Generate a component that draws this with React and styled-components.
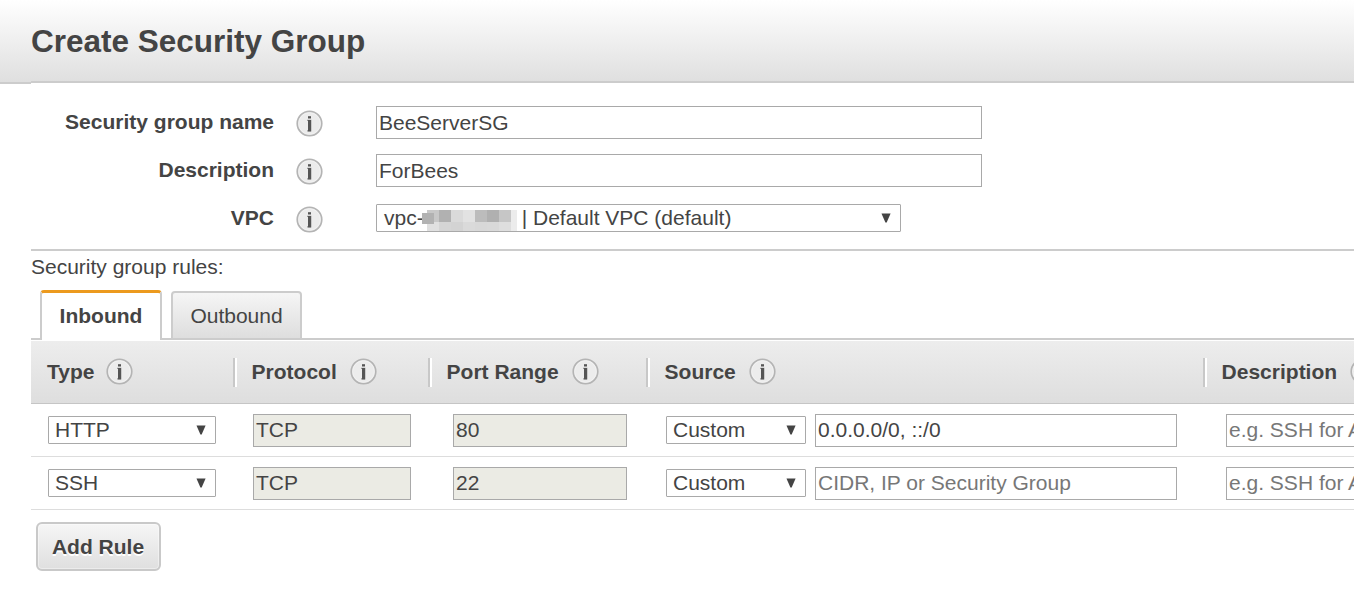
import React from "react";
import styled, { createGlobalStyle } from "styled-components";

const GlobalStyle = createGlobalStyle`
  * { box-sizing: border-box; }
  html, body { margin: 0; padding: 0; background: #fff; overflow: hidden; }
  body {
    font-family: "Liberation Sans", Arial, sans-serif;
    font-size: 21px;
    line-height: 24px;
    color: #444;
  }
`;

const Page = styled.div`
  width: 100vw;
  height: 100vh;
  overflow: hidden;
`;

const Header = styled.header`
  height: 84px;
  padding: 22px 0 0 31px;
  border-bottom: 2px solid #ccc;
  background: linear-gradient(#fff, #dfdfdf);
`;

const Title = styled.h1`
  margin: 0;
  font-size: 31.5px;
  line-height: 38px;
  font-weight: bold;
`;

const Content = styled.main`
  position: relative;
  margin: -3px 0 0 31px;
  border-top: 2px solid #ccc;
  background: #fff;
`;

const Form = styled.div`
  height: 166px;
  padding-top: 23px;
  display: flex;
  flex-direction: column;
  gap: 15px;
`;

const FormRow = styled.div`
  display: flex;
  height: 33px;
`;

const Label = styled.label`
  width: 243px;
  padding-top: 4px;
  text-align: right;
  font-weight: bold;
`;

const FormIcon = styled.div`
  width: 102px;
  padding: 4px 0 0 22px;
`;

const InfoSvg = styled.svg`
  display: block;
  flex: none;
`;

const Field = styled.div`
  flex: none;
  width: ${(p) => p.$width}px;
  height: 33px;
  padding: ${(p) => (p.$low ? 4 : 3)}px 2px 0;
  border: 1px solid #a9a9a9;
  background: ${(p) => (p.$disabled ? "#ebebe4" : "#fff")};
  color: ${(p) => (p.$placeholder ? "#777" : "#444")};
  white-space: nowrap;
  overflow: hidden;
`;

const SelectBox = styled.div`
  flex: none;
  display: flex;
  align-items: center;
  justify-content: space-between;
  width: ${(p) => p.$width}px;
  height: 28px;
  margin-top: 2px;
  padding: 0 9px 0 ${(p) => p.$inset}px;
  border: 1px solid #a9a9a9;
  border-radius: 1px;
  background: #fff;
  white-space: nowrap;
`;

const SelectText = styled.span`
  display: flex;
  align-items: center;
`;

const Mosaic = styled.svg`
  display: block;
  margin: 0 5px 0 -2px;
`;

const RulesSection = styled.section`
  border-top: 2px solid #ccc;
`;

const RulesTitle = styled.div`
  height: 39px;
  padding-top: 4px;
`;

const Tabs = styled.div`
  display: flex;
  align-items: flex-end;
  gap: 9px;
  height: 50px;
  padding-left: 9px;
  background: linear-gradient(#ccc, #ccc) 0 48px / 100% 2px no-repeat;
`;

const Tab = styled.div`
  display: flex;
  justify-content: center;
  width: ${(p) => (p.$active ? 122 : 131)}px;
  height: ${(p) => (p.$active ? 50 : 49)}px;
  padding-top: 11px;
  border: 2px solid #ccc;
  border-top: ${(p) => (p.$active ? "3px solid #ec9a1e" : "2px solid #ccc")};
  border-bottom: ${(p) => (p.$active ? "0" : "2px solid #ccc")};
  border-radius: 4px 4px 0 0;
  background: ${(p) => (p.$active ? "#fff" : "linear-gradient(#f5f5f5, #dedede)")};
  font-weight: ${(p) => (p.$active ? "bold" : "normal")};
`;

const columns = "202px 195px 218px 557px 400px";

const TableHead = styled.div`
  display: grid;
  grid-template-columns: ${columns};
  height: 63px;
  margin-top: 1px;
  border-bottom: 1px solid #c5c5c5;
  background: linear-gradient(#ededed, #dedede);
  font-weight: bold;
`;

const HeadCell = styled.div`
  display: flex;
  align-items: center;
  gap: ${(p) => (p.$first ? 12 : 13)}px;
  height: 29px;
  margin-top: 17px;
  padding: 0 0 2px ${(p) => (p.$first ? 16 : 16.6)}px;
  border-left: ${(p) => (p.$first ? "0" : "2px solid #c8c8c8")};
  box-shadow: ${(p) => (p.$first ? "none" : "inset 2px 0 #fff")};
`;

const RuleRow = styled.div`
  display: grid;
  grid-template-columns: ${columns};
  height: 53px;
  padding-top: 10px;
  border-bottom: 1px solid #ddd;
`;

const RuleCell = styled.div`
  display: flex;
  gap: 9px;
  padding-left: ${(p) => p.$inset}px;
`;

const AddButton = styled.button`
  display: block;
  width: 125px;
  height: 49px;
  margin: 12px 0 0 5px;
  padding: 0 1px 0 0;
  border: 2px solid #c9c9c9;
  border-radius: 6px;
  background: linear-gradient(#f6f6f6, #dfdfdf);
  box-shadow: inset 0 0 0 1px rgba(255, 255, 255, 0.4);
  color: #444;
  font: bold 21px/24px "Liberation Sans", Arial, sans-serif;
  text-shadow: 0 2px 0 #fff;
`;

function InfoIcon() {
  return (
    <InfoSvg width="27" height="27" viewBox="0 0 27 27">
      <circle cx="13.5" cy="13.5" r="12.2" fill="#ececec" stroke="#b4b4b4" strokeWidth="1.8" />
      <circle cx="13.5" cy="13.5" r="10.9" fill="none" stroke="#f4f4f4" strokeWidth="0.8" />
      <path d="M11 9.8h4.4v11.8H11v-1.4h1V11h-1z" fill="#999" />
      <rect x="12" y="6.2" width="3" height="2.3" fill="#555" />
      <rect x="12" y="10" width="3" height="11.4" fill="#555" />
    </InfoSvg>
  );
}

function Arrow() {
  return (
    <svg width="10" height="10" viewBox="0 0 10 10">
      <path d="M0.5 0.5h9.1L5.7 9.5H4.4z" fill="#444" />
    </svg>
  );
}

function Select({ width, inset = 6, children }) {
  return (
    <SelectBox $width={width} $inset={inset}>
      <SelectText>{children}</SelectText>
      <Arrow />
    </SelectBox>
  );
}

const mosaicTop = ["#c8c8c8", "#b1b1b1", "#dadada", "#e2e2e2", "#bcbcbc", "#b0b0b0", "#c6c6c6", "#ececec"];
const mosaicBottom = ["#e0e0e0", "#d5d5d5", "#d3d3d3", "#dadada", "#d8d8d8", "#d9d9d9", "#dedede", "#ececec"];

function HiddenId() {
  return (
    <Mosaic width="95" height="26" viewBox="0 0 95 26" shapeRendering="crispEdges">
      {mosaicTop.map((fill, i) => (
        <rect key={i} x={i * 12 + 5} y="5" width={i === 7 ? 6 : 12} height="12" fill={fill} />
      ))}
      {mosaicBottom.map((fill, i) => (
        <rect key={i} x={i * 12 + 5} y="17" width={i === 7 ? 6 : 12} height="9" fill={fill} />
      ))}
      <rect x="0" y="8" width="12" height="11" fill="#b2b2b2" />
    </Mosaic>
  );
}

const headings = ["Type", "Protocol", "Port Range", "Source", "Description"];

const rules = [
  { type: "HTTP", protocol: "TCP", port: "80", source: "0.0.0.0/0, ::/0" },
  { type: "SSH", protocol: "TCP", port: "22", source: "" },
];

export default function App() {
  return (
    <Page>
      <GlobalStyle />
      <Header>
        <Title>Create Security Group</Title>
      </Header>
      <Content>
        <Form>
          <FormRow>
            <Label>Security group name</Label>
            <FormIcon><InfoIcon /></FormIcon>
            <Field $width={606} $low>BeeServerSG</Field>
          </FormRow>
          <FormRow>
            <Label>Description</Label>
            <FormIcon><InfoIcon /></FormIcon>
            <Field $width={606} $low>ForBees</Field>
          </FormRow>
          <FormRow>
            <Label>VPC</Label>
            <FormIcon><InfoIcon /></FormIcon>
            <Select width={525} inset={7}>
              <span>vpc-</span>
              <HiddenId />
              <span>| Default VPC (default)</span>
            </Select>
          </FormRow>
        </Form>
        <RulesSection>
          <RulesTitle>Security group rules:</RulesTitle>
          <Tabs>
            <Tab $active>Inbound</Tab>
            <Tab>Outbound</Tab>
          </Tabs>
          <TableHead>
            {headings.map((heading, i) => (
              <HeadCell key={heading} $first={i === 0}>
                {heading}
                <InfoIcon />
              </HeadCell>
            ))}
          </TableHead>
          {rules.map((rule) => (
            <RuleRow key={rule.type}>
              <RuleCell $inset={17}><Select width={168}>{rule.type}</Select></RuleCell>
              <RuleCell $inset={20}><Field $width={158} $disabled>{rule.protocol}</Field></RuleCell>
              <RuleCell $inset={25}><Field $width={174} $disabled>{rule.port}</Field></RuleCell>
              <RuleCell $inset={20}>
                <Select width={140}>Custom</Select>
                <Field $width={362} $placeholder={!rule.source}>
                  {rule.source || "CIDR, IP or Security Group"}
                </Field>
              </RuleCell>
              <RuleCell $inset={23}>
                <Field $width={362} $placeholder>e.g. SSH for Admin Desktop</Field>
              </RuleCell>
            </RuleRow>
          ))}
          <AddButton>Add Rule</AddButton>
        </RulesSection>
      </Content>
    </Page>
  );
}
